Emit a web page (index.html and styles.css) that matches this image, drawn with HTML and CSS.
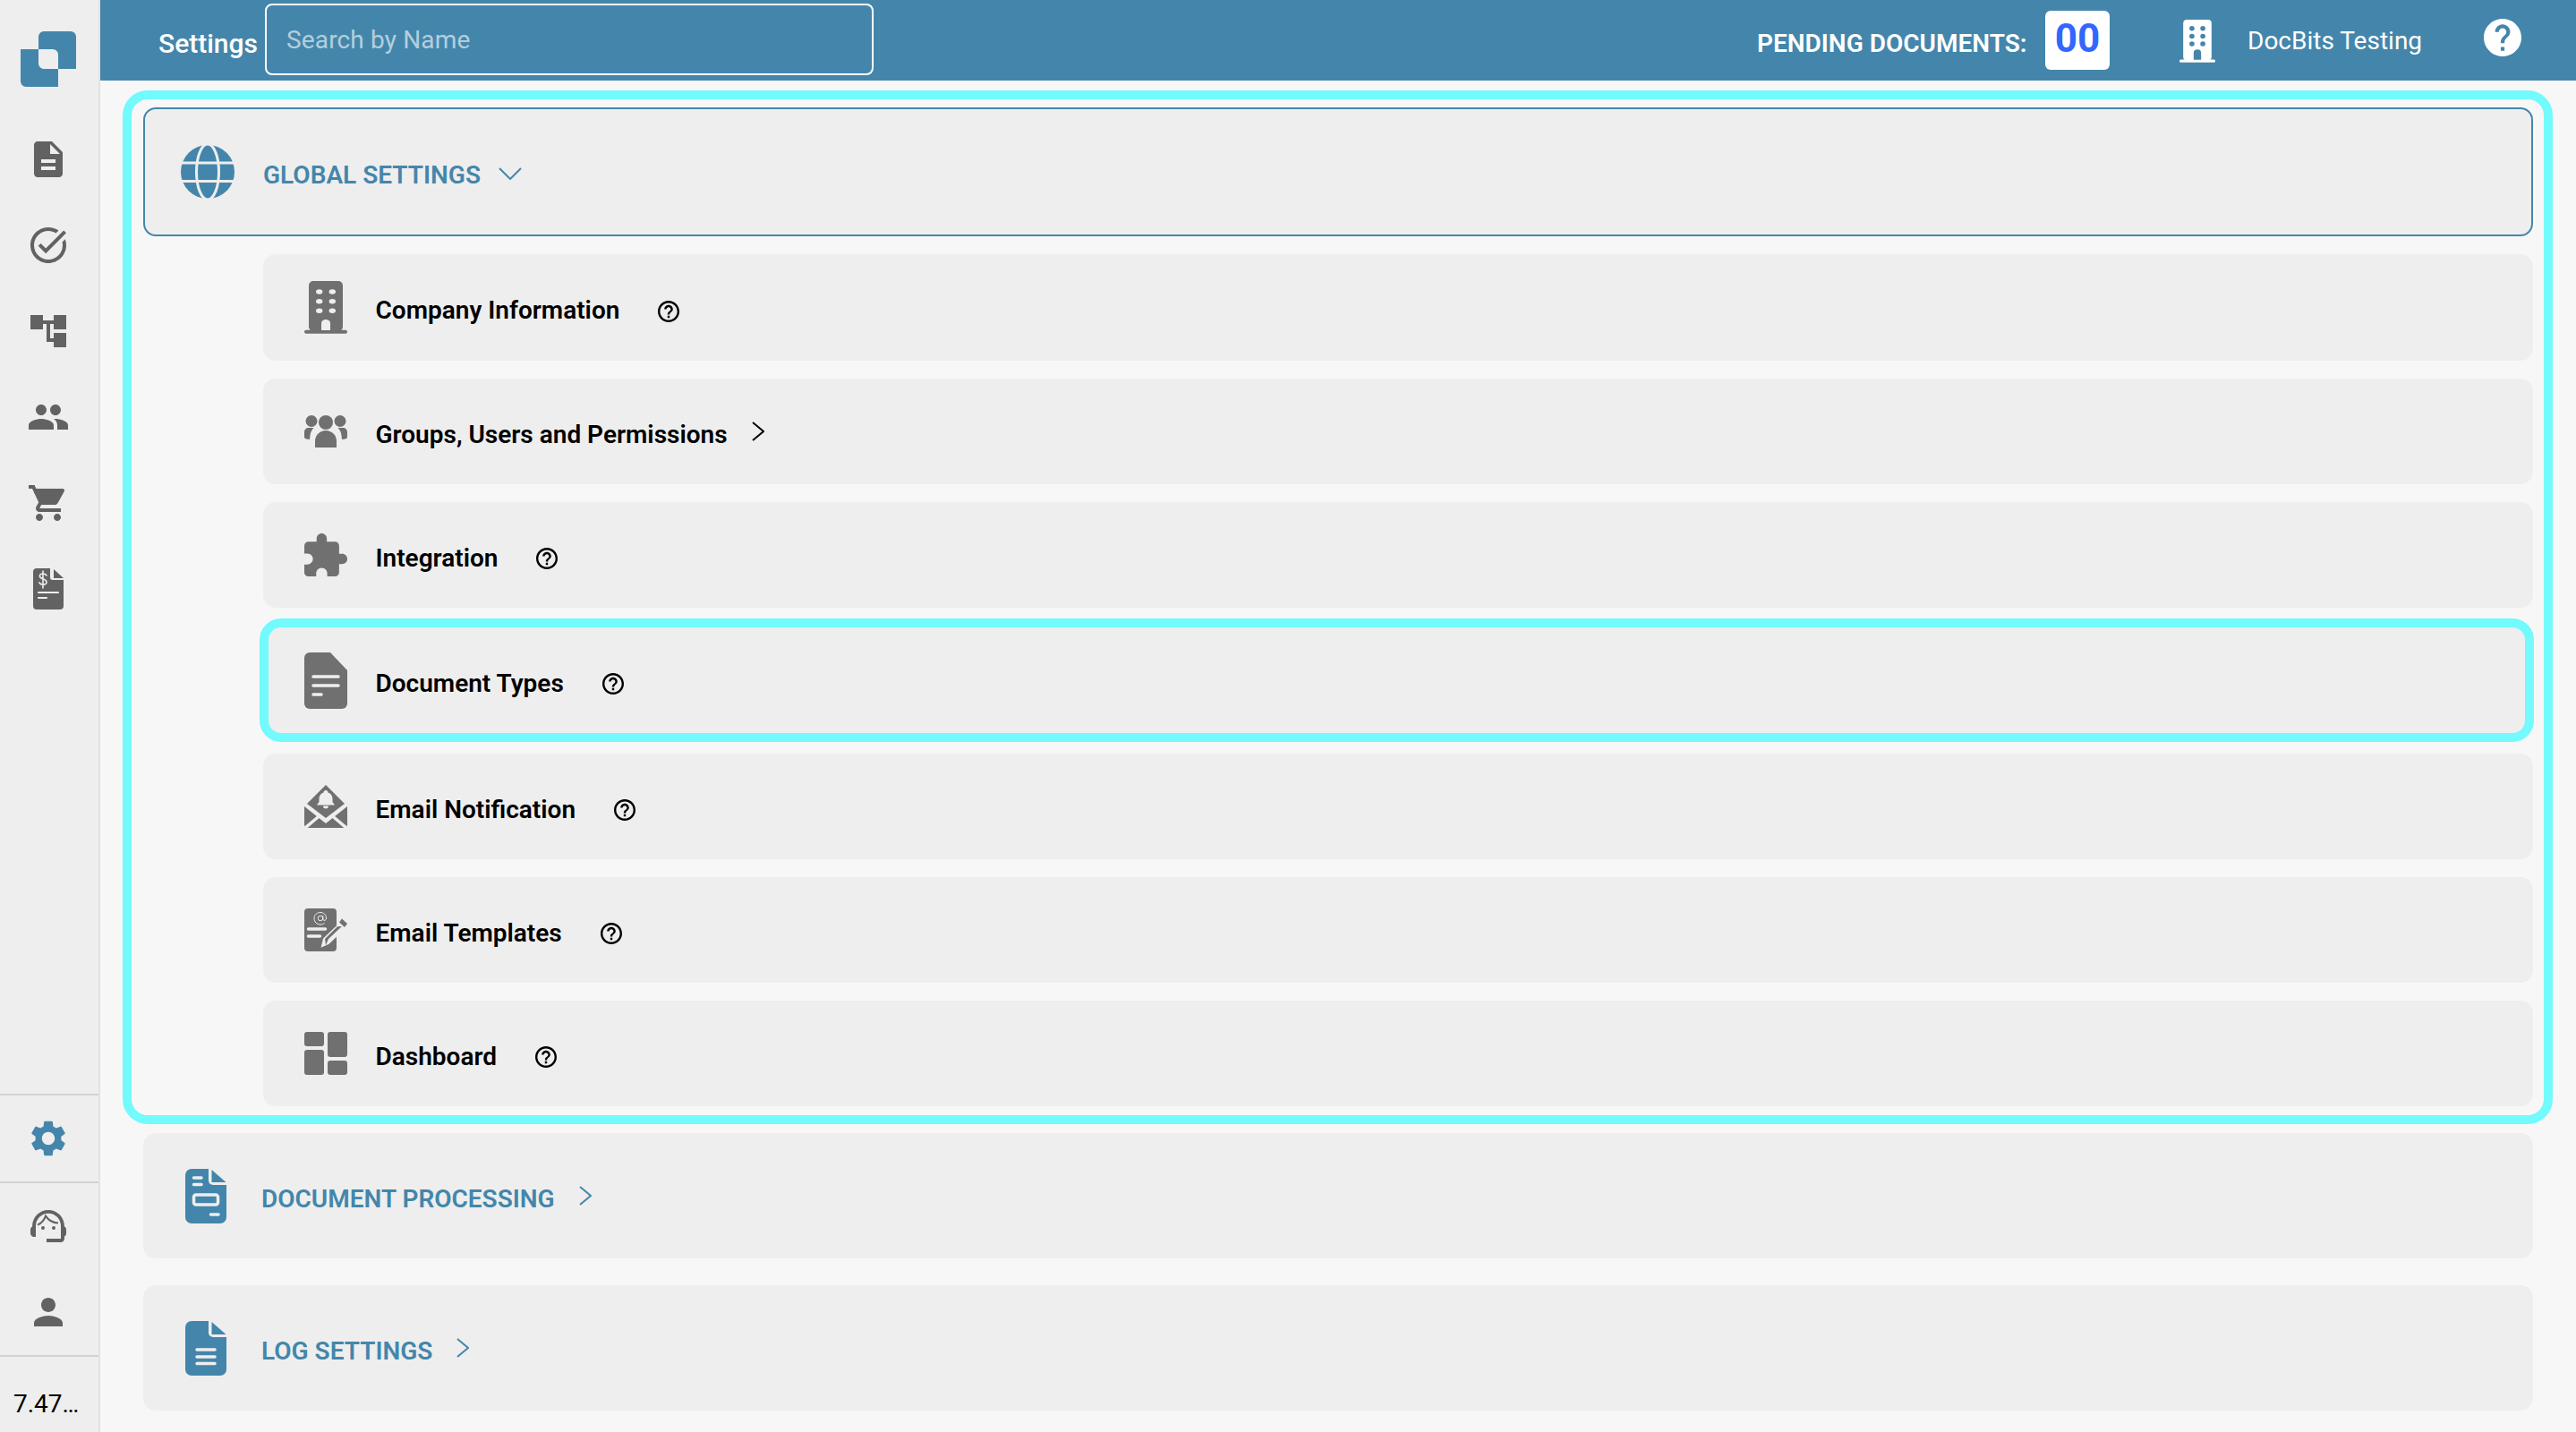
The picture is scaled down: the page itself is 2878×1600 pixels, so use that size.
FILE: index.html
```html
<!DOCTYPE html>
<html lang="en">
<head>
<meta charset="utf-8">
<title>Settings</title>
<link rel="stylesheet" href="styles.css">
</head>
<body>
<div class="app">
  <aside class="sidebar">
    <div class="logo-wrap">
      <svg class="logo" width="62" height="62" viewBox="0 0 62 62"><path class="blue" d="M26 0h30a6 6 0 0 1 6 6v36H42V26a6 6 0 0 0-6-6H20V6a6 6 0 0 1 6-6z"/><path class="blue" d="M0 20h20v16a6 6 0 0 0 6 6h16v20H6a6 6 0 0 1-6-6z"/></svg>
    </div>
    <nav class="nav">
      <svg class="side-icon" width="48" height="48" viewBox="0 0 24 24"><path d="M14 2H6c-1.1 0-1.99.9-1.99 2L4 20c0 1.1.89 2 1.99 2H18c1.1 0 2-.9 2-2V8l-6-6zm2 16H8v-2h8v2zm0-4H8v-2h8v2zm-3-5V3.5L18.5 9H13z"/></svg>
      <svg class="side-icon" width="48" height="48" viewBox="0 0 24 24"><path d="M22 5.18L10.59 16.6l-4.24-4.24 1.41-1.41 2.83 2.83 10-10L22 5.18zm-2.21 5.04c.13.57.21 1.17.21 1.78 0 4.42-3.58 8-8 8s-8-3.58-8-8 3.58-8 8-8c1.58 0 3.04.46 4.28 1.25l1.44-1.44C16.1 2.67 14.13 2 12 2 6.48 2 2 6.48 2 12s4.48 10 10 10 10-4.48 10-10c0-1.19-.22-2.33-.6-3.39l-1.61 1.61z"/></svg>
      <svg class="side-icon" width="48" height="48" viewBox="0 0 24 24"><path d="M22 11V3h-7v3H9V3H2v8h7V8h2v10h4v3h7v-8h-7v3h-2V8h2v3z"/></svg>
      <svg class="side-icon" width="48" height="48" viewBox="0 0 24 24"><path d="M16 11c1.66 0 2.99-1.34 2.99-3S17.66 5 16 5c-1.66 0-3 1.34-3 3s1.34 3 3 3zm-8 0c1.66 0 2.99-1.34 2.99-3S9.66 5 8 5C6.34 5 5 6.34 5 8s1.34 3 3 3zm0 2c-2.33 0-7 1.17-7 3.5V19h14v-2.5c0-2.33-4.67-3.5-7-3.5zm8 0c-.29 0-.62.02-.97.05 1.16.84 1.97 1.97 1.97 3.45V19h6v-2.5c0-2.33-4.67-3.5-7-3.5z"/></svg>
      <svg class="side-icon" width="48" height="48" viewBox="0 0 24 24"><path d="M7 18c-1.1 0-1.99.9-1.99 2S5.9 22 7 22s2-.9 2-2-.9-2-2-2zM1 2v2h2l3.6 7.59-1.35 2.45c-.16.28-.25.61-.25.96 0 1.1.9 2 2 2h12v-2H7.42c-.14 0-.25-.11-.25-.25l.03-.12.9-1.63h7.45c.75 0 1.41-.41 1.75-1.03l3.58-6.49c.08-.14.12-.31.12-.48 0-.55-.45-1-1-1H5.21l-.94-2H1zm16 16c-1.1 0-1.99.9-1.99 2s.89 2 1.99 2 2-.9 2-2-.9-2-2-2z"/></svg>
      <svg class="side-icon" width="48" height="48" viewBox="-7 -1 48 48"><path d="M4 0h15v10a3 3 0 0 0 3 3h12v29a4 4 0 0 1-4 4H4a4 4 0 0 1-4-4V4a4 4 0 0 1 4-4z"/><path d="M23 1l11 10H23z"/><g class="cut-line"><path d="M15 8c-1-1.6-2.4-2-4-2-2.200 0-3.600 1.200-3.600 2.800 0 4 7.600 2.400 7.600 6.400 0 1.800-1.600 3-4 3-1.800 0-3.200-.6-4.200-2.200M11 3v19"/><path d="M6 27h22M6 33h9" stroke-width="2.200"/></g></svg>
    </nav>
    <div class="side-section side-settings">
      <svg class="side-icon active" width="48" height="48" viewBox="0 0 24 24"><path d="M19.14 12.94c.04-.3.06-.61.06-.94 0-.32-.02-.64-.07-.94l2.03-1.58c.18-.14.23-.41.12-.61l-1.92-3.32c-.12-.22-.37-.29-.59-.22l-2.39.96c-.5-.38-1.03-.7-1.62-.94l-.36-2.54c-.04-.24-.24-.41-.48-.41h-3.84c-.24 0-.43.17-.47.41l-.36 2.54c-.59.24-1.13.57-1.62.94l-2.39-.96c-.22-.08-.47 0-.59.22L2.74 8.87c-.12.21-.08.47.12.61l2.03 1.58c-.05.3-.09.63-.09.94s.02.64.07.94l-2.03 1.58c-.18.14-.23.41-.12.61l1.920 3.32c.12.22.37.29.59.22l2.39-.96c.5.38 1.03.7 1.62.94l.36 2.54c.05.24.24.41.48.41h3.84c.24 0 .44-.17.47-.41l.36-2.54c.59-.24 1.13-.56 1.62-.94l2.39.96c.22.08.47 0 .59-.22l1.92-3.32c.12-.22.07-.47-.12-.61l-2.01-1.58zM12 15.6c-1.98 0-3.6-1.62-3.6-3.6s1.62-3.6 3.6-3.6 3.6 1.62 3.6 3.6-1.62 3.6-3.6 3.6z"/></svg>
    </div>
    <div class="side-section side-account">
      <svg class="side-icon" width="48" height="48" viewBox="0 0 24 24"><path d="M21 12.22C21 6.73 16.74 3 12 3c-4.69 0-9 3.65-9 9.28-.6.34-1 .98-1 1.72v2c0 1.1.9 2 2 2h1v-6.1c0-3.87 3.13-7 7-7s7 3.13 7 7V19h-8v2h8c1.1 0 2-.9 2-2v-1.22c.59-.31 1-.92 1-1.64v-2.3c0-.7-.41-1.31-1-1.62z"/><circle cx="9" cy="13" r="1"/><circle cx="15" cy="13" r="1"/><path class="hair" d="M6 11.300c2.200-1 3.800-2.800 4.500-5 1.500 2.300 4 3.800 7 4"/></svg>
      <svg class="side-icon" width="48" height="48" viewBox="0 0 24 24"><path d="M12 12c2.21 0 4-1.79 4-4s-1.79-4-4-4-4 1.79-4 4 1.79 4 4 4zm0 2c-2.67 0-8 1.34-8 4v2h16v-2c0-2.66-5.33-4-8-4z"/></svg>
    </div>
    <div class="version">7.47…</div>
  </aside>

  <div class="main">
    <header class="topbar">
      <span class="page-title">Settings</span>
      <div class="search"><span class="placeholder">Search by Name</span></div>
      <span class="pending">PENDING DOCUMENTS:</span>
      <span class="count">00</span>
      <svg class="tenant-icon" width="40" height="48" viewBox="0 0 48 59" preserveAspectRatio="none"><rect x="5" width="38" height="56" rx="5"/><rect y="54.700" width="48" height="4" rx="2"/><g class="holes"><circle cx="16.700" cy="12" r="3.400"/><circle cx="31.300" cy="12" r="3.400"/><circle cx="16.700" cy="22.700" r="3.400"/><circle cx="31.300" cy="22.700" r="3.400"/><circle cx="16.700" cy="33.300" r="3.400"/><circle cx="31.300" cy="33.300" r="3.400"/><path d="M19 55V46a5 5 0 0 1 10 0v9z"/></g></svg>
      <span class="tenant">DocBits Testing</span>
      <svg class="top-help" width="42" height="42" viewBox="2 2 20 20"><path d="M12 2C6.480 2 2 6.480 2 12s4.480 10 10 10 10-4.480 10-10S17.520 2 12 2zm1 17h-2v-2h2v2zm2.070-7.750l-.9.920C13.450 12.900 13 13.500 13 15h-2v-.5c0-1.100.45-2.100 1.170-2.830l1.240-1.260c.37-.36.59-.86.59-1.410 0-1.100-.9-2-2-2s-2 .9-2 2H8c0-2.210 1.790-4 4-4s4 1.790 4 4c0 .88-.36 1.680-.93 2.250z"/></svg>
    </header>

    <main class="content">
      <section class="group">
        <div class="section section-open">
          <svg class="section-icon" width="60" height="60" viewBox="0 0 60 60"><circle cx="30" cy="30" r="30"/><g class="cuts"><ellipse cx="30" cy="30" rx="12.500" ry="31"/><path d="M-1 20h62M-1 40.500h62"/></g></svg>
          <span class="section-label label-global">GLOBAL SETTINGS</span>
          <svg class="chev-down" width="26" height="14" viewBox="0 0 26 14"><path d="M1 1l12 12L25 1"/></svg>
        </div>

        <div class="row row-first">
          <svg class="row-icon" width="48" height="59" viewBox="0 0 48 59"><rect x="5" width="38" height="56" rx="5"/><rect y="54.700" width="48" height="4" rx="2"/><g class="holes"><ellipse cx="16.700" cy="12" rx="3.700" ry="2.700"/><ellipse cx="31.300" cy="12" rx="3.700" ry="2.700"/><ellipse cx="16.700" cy="22.700" rx="3.700" ry="2.700"/><ellipse cx="31.300" cy="22.700" rx="3.700" ry="2.700"/><ellipse cx="16.700" cy="33.300" rx="3.700" ry="2.700"/><ellipse cx="31.300" cy="33.300" rx="3.700" ry="2.700"/><path d="M19 55V47a5 4 0 0 1 10 0v8z"/></g></svg>
          <span class="row-label">Company Information</span>
          <svg class="help" width="24" height="24" viewBox="2 2 20 20"><path d="M11 18h2v-2h-2v2zm1-16C6.480 2 2 6.480 2 12s4.480 10 10 10 10-4.480 10-10S17.520 2 12 2zm0 18c-4.410 0-8-3.590-8-8s3.590-8 8-8 8 3.590 8 8-3.590 8-8 8zm0-14c-2.210 0-4 1.790-4 4h2c0-1.100.9-2 2-2s2 .9 2 2c0 2-3 1.750-3 5h2c0-2.250 3-2.500 3-5 0-2.210-1.790-4-4-4z"/></svg>
        </div>

        <div class="row">
          <svg class="row-icon" width="48" height="36" viewBox="0 0 48 36"><circle cx="24" cy="8" r="8"/><circle cx="8" cy="6.500" r="6.500"/><circle cx="40" cy="6.500" r="6.500"/><path d="M12 36v-7a12 12 0 0 1 24 0v7z"/><path d="M0 24v-5c0-3 2-5 5-5h5.500c-2.500 2.500-3.500 5-4 8.500l-.5 4.500-3.500-.5C1 26.500 0 25.500 0 24z"/><path d="M48 24v-5c0-3-2-5-5-5h-5.500c2.500 2.500 3.500 5 4 8.500l.5 4.500 3.500-.5c1.500 0 2.500-1 2.500-2.500z"/></svg>
          <span class="row-label">Groups, Users and Permissions</span>
          <svg class="chev-right" width="14" height="22" viewBox="0 0 14 22"><path d="M1 1l12 10L1 21"/></svg>
        </div>

        <div class="row">
          <svg class="row-icon" width="48" height="48" viewBox="2 1 21 21"><path d="M20.500 11H19V7c0-1.100-.9-2-2-2h-4V3.500C13 2.120 11.880 1 10.500 1S8 2.120 8 3.500V5H4c-1.100 0-1.990.9-1.990 2v3.800H3.500c1.490 0 2.700 1.210 2.700 2.700s-1.210 2.700-2.700 2.700H2V20c0 1.100.9 2 2 2h3.800v-1.500c0-1.490 1.210-2.700 2.700-2.700 1.490 0 2.700 1.210 2.700 2.700V22H17c1.100 0 2-.9 2-2v-4h1.500c1.380 0 2.500-1.120 2.500-2.500S21.880 11 20.500 11z"/></svg>
          <span class="row-label">Integration</span>
          <svg class="help" width="24" height="24" viewBox="2 2 20 20"><path d="M11 18h2v-2h-2v2zm1-16C6.480 2 2 6.480 2 12s4.480 10 10 10 10-4.480 10-10S17.520 2 12 2zm0 18c-4.410 0-8-3.590-8-8s3.590-8 8-8 8 3.590 8 8-3.590 8-8 8zm0-14c-2.210 0-4 1.790-4 4h2c0-1.100.9-2 2-2s2 .9 2 2c0 2-3 1.750-3 5h2c0-2.250 3-2.500 3-5 0-2.210-1.790-4-4-4z"/></svg>
        </div>

        <div class="row row-marked">
          <svg class="row-icon" width="48" height="63" viewBox="0 0 48 63"><path d="M6 0h23l19 20v37a6 6 0 0 1-6 6H6a6 6 0 0 1-6-6V6a6 6 0 0 1 6-6z"/><g class="cut-line row-cut"><path d="M10 27h28M10 37h28M10 47h9"/></g></svg>
          <span class="row-label">Document Types</span>
          <svg class="help" width="24" height="24" viewBox="2 2 20 20"><path d="M11 18h2v-2h-2v2zm1-16C6.480 2 2 6.480 2 12s4.480 10 10 10 10-4.480 10-10S17.520 2 12 2zm0 18c-4.410 0-8-3.590-8-8s3.590-8 8-8 8 3.590 8 8-3.590 8-8 8zm0-14c-2.210 0-4 1.790-4 4h2c0-1.100.9-2 2-2s2 .9 2 2c0 2-3 1.750-3 5h2c0-2.250 3-2.500 3-5 0-2.210-1.790-4-4-4z"/></svg>
          <div class="mark mark-row"></div>
        </div>

        <div class="row row-after-mark">
          <svg class="row-icon" width="48" height="48" viewBox="0 0 48 48"><path d="M24 0l21 21-21 16L3 21z"/><path class="holes" d="M24 6c-1.500 0-2.500 1-2.500 2.400-3.300 1-5 3.800-5 7v3.600L14 22.500h20L31.500 19v-3.600c0-3.200-1.700-6-5-7C26.500 7 25.500 6 24 6zM21 23.500h6a3 3 0 0 1-6 0z"/><path d="M0 24l24 19 24-19v20a4 4 0 0 1-4 4H4a4 4 0 0 1-4-4z"/><path class="cut-line row-cut" d="M1 48l16-13.500M47 48L31 34.500"/></svg>
          <span class="row-label">Email Notification</span>
          <svg class="help" width="24" height="24" viewBox="2 2 20 20"><path d="M11 18h2v-2h-2v2zm1-16C6.480 2 2 6.480 2 12s4.480 10 10 10 10-4.480 10-10S17.520 2 12 2zm0 18c-4.410 0-8-3.590-8-8s3.590-8 8-8 8 3.590 8 8-3.590 8-8 8zm0-14c-2.210 0-4 1.790-4 4h2c0-1.100.9-2 2-2s2 .9 2 2c0 2-3 1.750-3 5h2c0-2.250 3-2.500 3-5 0-2.210-1.790-4-4-4z"/></svg>
        </div>

        <div class="row">
          <svg class="row-icon" width="48" height="48" viewBox="0 0 48 48"><rect width="36" height="48" rx="4"/><g class="cut-line at"><circle cx="18" cy="11" r="2.800"/><path d="M20.800 8.500v3.500c0 2 3.700 2 3.700-1 0-4-3-6.500-6.500-6.500S11 7 11 11s3 7 7 7c1.800 0 3.200-.5 4.300-1.300"/></g><g class="cut-line row-cut pen-lines"><path d="M4.500 23h19M4.500 31h13"/></g><path class="pen-edge" d="M20 42l2-8 18-17 5 5-18 17z"/><path d="M24 41l3-7 15-14-5 .3-14 13.700z"/><path class="pen-edge thin" d="M37.500 14.500l8.500 8"/><path d="M42 11.500l6 5.500-3 4-6-5.500z"/></svg>
          <span class="row-label">Email Templates</span>
          <svg class="help" width="24" height="24" viewBox="2 2 20 20"><path d="M11 18h2v-2h-2v2zm1-16C6.480 2 2 6.480 2 12s4.480 10 10 10 10-4.480 10-10S17.520 2 12 2zm0 18c-4.410 0-8-3.590-8-8s3.590-8 8-8 8 3.590 8 8-3.590 8-8 8zm0-14c-2.210 0-4 1.790-4 4h2c0-1.100.9-2 2-2s2 .9 2 2c0 2-3 1.750-3 5h2c0-2.250 3-2.500 3-5 0-2.210-1.790-4-4-4z"/></svg>
        </div>

        <div class="row">
          <svg class="row-icon" width="48" height="48" viewBox="0 0 48 48"><rect width="22" height="16" rx="3"/><rect y="20" width="22" height="28" rx="3"/><rect x="26" width="22" height="28" rx="3"/><rect x="26" y="32" width="22" height="16" rx="3"/></svg>
          <span class="row-label">Dashboard</span>
          <svg class="help" width="24" height="24" viewBox="2 2 20 20"><path d="M11 18h2v-2h-2v2zm1-16C6.480 2 2 6.480 2 12s4.480 10 10 10 10-4.480 10-10S17.520 2 12 2zm0 18c-4.410 0-8-3.590-8-8s3.590-8 8-8 8 3.590 8 8-3.590 8-8 8zm0-14c-2.210 0-4 1.790-4 4h2c0-1.100.9-2 2-2s2 .9 2 2c0 2-3 1.750-3 5h2c0-2.250 3-2.500 3-5 0-2.210-1.790-4-4-4z"/></svg>
        </div>
        <div class="mark mark-group"></div>
      </section>

      <div class="section">
        <svg class="section-icon" width="46" height="61" viewBox="0 0 46 61"><path d="M7 0h19v13a5 5 0 0 0 5 5h15v36a7 7 0 0 1-7 7H7a7 7 0 0 1-7-7V7a7 7 0 0 1 7-7z"/><path d="M29.500 1L45.500 15h-16z"/><g class="cut-line sec-cut"><path d="M9.500 10h8.500M9.500 17.500h8.500M28.500 51h8.500"/><rect x="9.500" y="29" width="27" height="11" rx="2.500"/></g></svg>
        <span class="section-label">DOCUMENT PROCESSING</span>
        <svg class="chev-right chev-blue" width="14" height="22" viewBox="0 0 14 22"><path d="M1 1l12 10L1 21"/></svg>
      </div>

      <div class="section">
        <svg class="section-icon" width="46" height="61" viewBox="0 0 46 61"><path d="M7 0h19v13a5 5 0 0 0 5 5h15v36a7 7 0 0 1-7 7H7a7 7 0 0 1-7-7V7a7 7 0 0 1 7-7z"/><path d="M29.500 1L45.500 15h-16z"/><g class="cut-line sec-cut"><path d="M13 32h20M13 40h20M13 47.500h20"/></g></svg>
        <span class="section-label">LOG SETTINGS</span>
        <svg class="chev-right chev-blue" width="14" height="22" viewBox="0 0 14 22"><path d="M1 1l12 10L1 21"/></svg>
      </div>
    </main>
  </div>
</div>
</body>
</html>
```
FILE: styles.css
```css
* { box-sizing: border-box; }
html, body { margin: 0; padding: 0; }
body {
  font-family: Roboto, "Liberation Sans", sans-serif;
  background: #f7f7f7;
  color: #000;
}
svg { display: block; flex: none; }

.app { display: flex; width: 2878px; height: 1600px; overflow: hidden; }

/* sidebar */
.sidebar {
  width: 112px;
  flex: none;
  background: #eeeeee;
  border-right: 2px solid #e2e2e2;
  display: flex;
  flex-direction: column;
  align-items: stretch;
}
.logo-wrap { padding: 35px 0 0 23px; height: 154px; }
.blue { fill: #4486ab; }
.nav { flex: 1; display: flex; flex-direction: column; align-items: center; gap: 48px; padding-right: 2px; }
.side-icon { fill: #626262; }
.side-icon.active { fill: #4486ab; }
.hair { fill: none; stroke: #626262; stroke-width: 1; }
.side-section {
  display: flex;
  flex-direction: column;
  align-items: center;
  padding-right: 2px;
  border-top: 2px solid #d2d2d2;
}
.side-settings { height: 98px; padding-top: 24px; }
.side-account { height: 194px; padding-top: 24px; gap: 48px; }
.version {
  height: 86px;
  border-top: 2px solid #d2d2d2;
  padding: 36px 0 0 15px;
  font-size: 28px;
  line-height: 33px;
}

/* top bar */
.main { flex: 1; min-width: 0; display: flex; flex-direction: column; }
.topbar {
  height: 90px;
  flex: none;
  background: #4486ab;
  color: #fff;
  display: flex;
  align-items: flex-start;
  padding-left: 65px;
}
.page-title { font-size: 30px; font-weight: 500; line-height: 35px; margin-top: 31px; width: 119px; }
.search {
  width: 680px;
  height: 80px;
  margin-top: 4px;
  border: 2px solid #fff;
  border-radius: 8px;
  padding: 22px 0 0 22px;
}
.placeholder { font-size: 28px; line-height: 33px; letter-spacing: 0.15px; color: rgba(255, 255, 255, 0.62); display: block; }
.pending { font-size: 28px; font-weight: 600; line-height: 33px; margin: 32px 0 0 987px; width: 322px; white-space: nowrap; }
.count {
  width: 72px;
  height: 66px;
  margin-top: 12px;
  background: #fff;
  border-radius: 6px;
  color: #3366ff;
  font-size: 44px;
  font-weight: 700;
  line-height: 62px;
  text-align: center;
}
.tenant-icon { fill: #fff; margin: 22px 0 0 78px; }
.tenant-icon .holes { fill: #4486ab; }
.tenant { font-size: 28px; line-height: 33px; margin: 29px 0 0 36px; width: 264px; white-space: nowrap; }
.top-help { fill: #fff; margin-top: 21px; }

/* content */
.content { flex: 1; padding: 30px 48px 0; display: flex; flex-direction: column; gap: 30px; }
.group { position: relative; display: flex; flex-direction: column; gap: 20px; }
.section {
  height: 140px;
  flex: none;
  background: #eeeeee;
  border-radius: 14px;
  padding-left: 47px;
  display: flex;
  align-items: center;
}
.section-open {
  height: 144px;
  border: 2px solid #4486ab;
  padding-left: 40px;
}
.section-icon { fill: #4486ab; }
.section-label {
  font-size: 28px;
  font-weight: 600;
  line-height: 33px;
  color: #4486ab;
  margin-left: 39px;
  padding-top: 7px;
}
.label-global { margin-left: 32px; padding-top: 7px; }
.cuts { fill: none; stroke: #eeeeee; stroke-width: 3; }
.chev-down { fill: none; stroke: #4486ab; stroke-width: 2; margin-left: 20px; margin-top: 4px; }
.chev-right { fill: none; stroke: #000; stroke-width: 2; margin-left: 27px; }
.chev-blue { stroke: #4486ab; }

.row {
  position: relative;
  height: 118px;
  flex: none;
  margin-left: 134px;
  background: #eeeeee;
  border-radius: 14px;
  padding-left: 46px;
  display: flex;
  align-items: center;
}
.row-first { height: 119px; }
.row-marked { margin-top: 2px; }
.row-after-mark { margin-top: 3px; }
.row-icon { fill: #707070; }
.row-label {
  font-size: 28px;
  font-weight: 600;
  line-height: 33px;
  margin-left: 31.500px;
  padding-top: 6px;
  white-space: nowrap;
}
.help { fill: #000; margin-left: 43px; margin-top: 8px; }
.holes { fill: #eeeeee; }

.cut-line { fill: none; stroke: #eeeeee; stroke-width: 1.600; stroke-linecap: round; }
.row-cut { stroke-width: 3.500; }
.sec-cut { stroke-width: 3.500; }
.at { stroke-width: 1; }
.pen-edge { fill: #eeeeee; stroke: #eeeeee; stroke-width: 2; }
.pen-edge.thin { fill: none; }

/* highlight frames lying over the content */
.mark { position: absolute; border: 10px solid #72fafd; pointer-events: none; }
.mark-row { top: -10px; bottom: -10px; left: -4px; right: -1px; border-radius: 24px; }
.mark-group { top: -19px; bottom: -20px; left: -23px; right: -22px; border-radius: 28px; }
```
